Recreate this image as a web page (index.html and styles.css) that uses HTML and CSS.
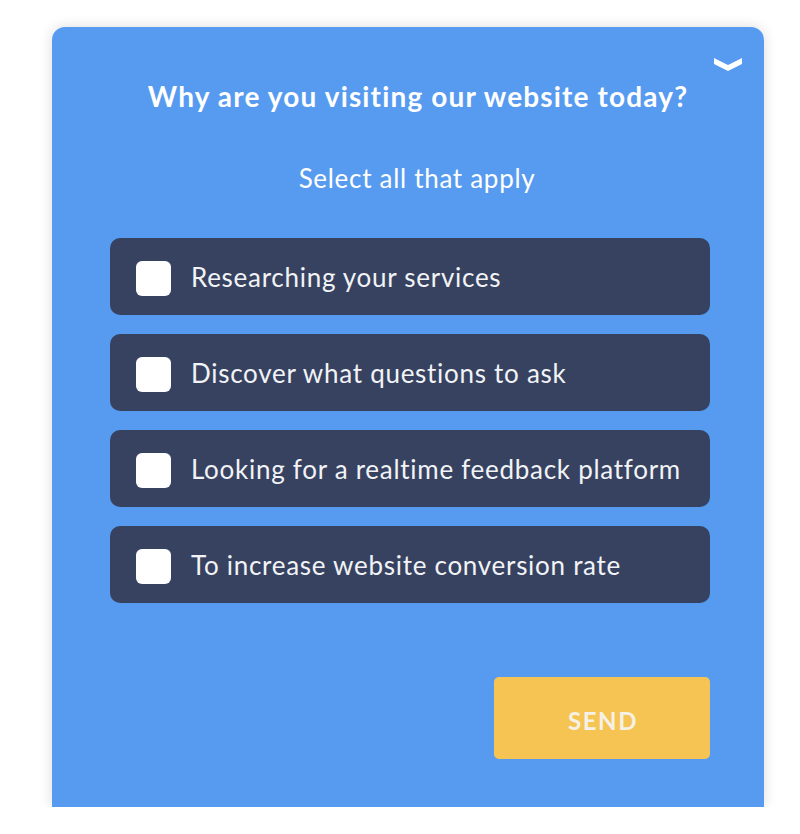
FILE: index.html
```html
<!DOCTYPE html>
<html lang="en">
<head>
<meta charset="utf-8">
<title>Survey</title>
<link rel="stylesheet" href="styles.css">
</head>
<body>
<div class="card">
  <svg class="collapse" width="28" height="13" viewBox="0 0 28 13" aria-hidden="true">
    <polygon points="0,0 14,7 28,0 28,6 14,13 0,6" fill="#ffffff"/>
  </svg>
  <h1 class="title">Why are you visiting our website today?</h1>
  <p class="subtitle">Select all that apply</p>
  <ul class="options">
    <li class="option"><span class="box"></span><span class="label">Researching your services</span></li>
    <li class="option"><span class="box"></span><span class="label">Discover what questions to ask</span></li>
    <li class="option"><span class="box"></span><span class="label">Looking for a realtime feedback platform</span></li>
    <li class="option"><span class="box"></span><span class="label">To increase website conversion rate</span></li>
  </ul>
  <div class="footer">
    <button class="send">SEND</button>
  </div>
</div>
</body>
</html>
```
FILE: styles.css
```css
html, body {
  margin: 0;
  padding: 0;
  background: #ffffff;
}
body {
  font-family: "Lato", "Open Sans", sans-serif;
  overflow: hidden;
}
.card {
  position: relative;
  box-sizing: border-box;
  margin: 27px 0 0 52px;
  width: 712px;
  height: 780px;
  padding-top: 53px;
  background: #579bf0;
  border-radius: 13px 13px 0 0;
  box-shadow: 0 0 14px rgba(0, 0, 0, 0.14);
  display: flex;
  flex-direction: column;
}
.collapse {
  position: absolute;
  top: 31px;
  right: 22px;
}
.title {
  margin: 0;
  padding-left: 20px;
  text-align: center;
  color: #ffffff;
  font-size: 28px;
  line-height: 32px;
  font-weight: 700;
  letter-spacing: 1.15px;
}
.subtitle {
  margin: 51px 0 0;
  padding-left: 18px;
  text-align: center;
  color: #ffffff;
  font-size: 26px;
  line-height: 30px;
  font-weight: 400;
  letter-spacing: 0.7px;
}
.options {
  list-style: none;
  margin: 45px 54px 0 58px;
  padding: 0;
  display: flex;
  flex-direction: column;
  gap: 19px;
}
.option {
  box-sizing: border-box;
  height: 77px;
  padding-left: 26px;
  background: #374260;
  border-radius: 10px;
  display: flex;
  align-items: center;
  gap: 20px;
}
.box {
  width: 35px;
  height: 35px;
  background: #ffffff;
  border-radius: 6px;
  flex: none;
  margin-top: 3px;
}
.label {
  color: #f1f3f6;
  font-size: 26px;
  line-height: 30px;
  letter-spacing: 0.72px;
}
.footer {
  margin: 74px 54px 0 0;
  display: flex;
  justify-content: flex-end;
}
.send {
  width: 216px;
  height: 82px;
  border: none;
  border-radius: 5px;
  background: #f5c453;
  color: #f6f1e6;
  font-family: "Lato", "Open Sans", sans-serif;
  font-size: 24px;
  font-weight: 700;
  letter-spacing: 1.6px;
  padding: 4px 0 0 2px;
}
```
